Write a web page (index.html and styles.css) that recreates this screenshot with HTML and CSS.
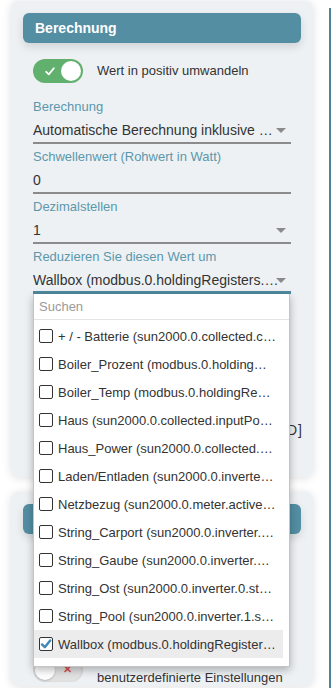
FILE: index.html
```html
<!DOCTYPE html>
<html>

<head>
    <meta name="viewport" content="width=device-width, initial-scale=1.0" />
    <link rel="stylesheet" href="styles.css">
</head>

<body>
    <div class="page">
        <div class="column">

            <!-- Berechnung -->
            <section class="card first-card">
                <div class="card-head">Berechnung</div>
                <div class="card-body">
                    <div class="switch-row">
                        <span class="switch on">
                            <svg class="switch-check" width="10" height="9" viewBox="0 0 10 9">
                                <path d="M1.2 4.8 L3.8 7.4 L8.8 1.2" fill="none" stroke="#fff" stroke-width="1.8" stroke-linecap="round" stroke-linejoin="round" />
                            </svg>
                            <span class="knob"></span>
                        </span>
                        <span class="switch-text">Wert in positiv umwandeln</span>
                    </div>

                    <div class="field">
                        <div class="field-label">Berechnung</div>
                        <div class="field-value select">Automatische Berechnung inklusive Eigenverbrauch</div>
                    </div>

                    <div class="field">
                        <div class="field-label">Schwellenwert (Rohwert in Watt)</div>
                        <div class="field-value">0</div>
                    </div>

                    <div class="field">
                        <div class="field-label">Dezimalstellen</div>
                        <div class="field-value select">1</div>
                    </div>

                    <div class="field focused">
                        <div class="field-label">Reduzieren Sie diesen Wert um</div>
                        <div class="field-value select">Wallbox (modbus.0.holdingRegisters.40001_Power)</div>

                        <!-- open menu -->
                        <div class="menu">
                            <div class="menu-search">Suchen</div>
                            <div class="menu-list">
                                <div class="menu-item"><span class="box"></span><span class="item-text">+ / - Batterie (sun2000.0.collected.chargeDischargePower)</span></div>
                                <div class="menu-item"><span class="box"></span><span class="item-text">Boiler_Prozent (modbus.0.holdingRegisters.40010)</span></div>
                                <div class="menu-item"><span class="box"></span><span class="item-text">Boiler_Temp (modbus.0.holdingRegisters.40012)</span></div>
                                <div class="menu-item"><span class="box"></span><span class="item-text">Haus (sun2000.0.collected.inputPower)</span></div>
                                <div class="menu-item"><span class="box"></span><span class="item-text">Haus_Power (sun2000.0.collected.houseConsumption)</span></div>
                                <div class="menu-item"><span class="box"></span><span class="item-text">Laden/Entladen (sun2000.0.inverter.0.battery)</span></div>
                                <div class="menu-item"><span class="box"></span><span class="item-text">Netzbezug (sun2000.0.meter.activePower)</span></div>
                                <div class="menu-item"><span class="box"></span><span class="item-text">String_Carport (sun2000.0.inverter.1.string.PV1)</span></div>
                                <div class="menu-item"><span class="box"></span><span class="item-text">String_Gaube (sun2000.0.inverter.0.string.PV2)</span></div>
                                <div class="menu-item"><span class="box"></span><span class="item-text">String_Ost (sun2000.0.inverter.0.string.PV1)</span></div>
                                <div class="menu-item"><span class="box"></span><span class="item-text">String_Pool (sun2000.0.inverter.1.string.PV2)</span></div>
                                <div class="menu-item selected">
                                    <span class="box checked">
                                        <svg width="12" height="12" viewBox="0 0 12 12">
                                            <path d="M2 6.4 L4.8 9.2 L10.2 2.4" fill="none" stroke="#3d88b8" stroke-width="2.4" stroke-linecap="round" stroke-linejoin="round" />
                                        </svg>
                                    </span>
                                    <span class="item-text">Wallbox (modbus.0.holdingRegisters.40001_Power)</span>
                                </div>
                            </div>
                        </div>
                    </div>

                    <!-- rest of the card lies behind the menu -->
                    <div class="note">[ID]</div>
                </div>
            </section>

            <!-- second card, mostly covered -->
            <section class="card">
                <div class="card-head"></div>
                <div class="card-body">
                    <div class="switch-row bottom-row">
                        <span class="switch off">
                            <span class="knob"></span>
                            <span class="cross">&#x2715;</span>
                        </span>
                        <span class="switch-text">Wert für<br>benutzerdefinierte Einstellungen</span>
                    </div>
                </div>
            </section>
        </div>
        <div class="edge"></div>
    </div>
</body>

</html>
```

FILE: styles.css
```css
html,
body {
    margin: 0;
    padding: 0;
    background: #fff;
    font-family: "Liberation Sans", Arial, sans-serif;
    color: #333;
    overflow: hidden;
}

.page {
    display: flex;
    height: 688px;
}

.column {
    width: 302px;
    margin-left: 11px;
    padding-top: 1px;
    display: flex;
    flex-direction: column;
    gap: 15px;
}

.edge {
    width: 2px;
    margin-left: 16px;
    margin-top: 8px;
    background: #4d8597;
}

.card {
    background: #edf1f4;
    border-radius: 8px;
    padding: 12px 12px 0 12px;
    box-shadow: 0 1px 10px rgba(0, 0, 0, 0.13);
}

.first-card {
    padding-bottom: 39px;
}

.card-head {
    height: 30px;
    line-height: 30px;
    padding-left: 12px;
    background: #538ea3;
    border-radius: 6px;
    color: #fff;
    font-weight: bold;
    font-size: 14px;
    box-shadow: 0 4px 8px rgba(0, 0, 0, 0.12);
}

.card-body {
    padding: 0 10px;
}

/* switches */
.switch-row {
    display: flex;
    align-items: center;
    gap: 14px;
    margin: 16px 0 11px;
    font-size: 13px;
}

.switch {
    position: relative;
    flex: none;
    width: 50px;
    height: 24px;
    border-radius: 12px;
    background: #e2e2e2;
    box-shadow: inset 0 1px 3px rgba(0, 0, 0, 0.15);
}

.switch .knob {
    position: absolute;
    top: 2px;
    left: 2px;
    width: 20px;
    height: 20px;
    border-radius: 50%;
    background: #fff;
    box-shadow: 0 1px 2px rgba(0, 0, 0, 0.2);
}

.switch.on {
    background: #62b06d;
    box-shadow: none;
}

.switch.on .knob {
    left: 28px;
    box-shadow: none;
}

.switch-check {
    position: absolute;
    left: 12px;
    top: 8px;
}

.switch .cross {
    position: absolute;
    left: 30px;
    top: 5px;
    font-size: 11px;
    line-height: 12px;
    color: #d9534f;
    font-weight: bold;
}

.switch-text {
    line-height: 16px;
    white-space: nowrap;
}

.bottom-row {
    margin: 120px 0 0;
}

/* fields */
.field {
    position: relative;
    padding-top: 5px;
}

.field-label {
    font-size: 13px;
    line-height: 16px;
    color: #5b98ac;
}

.field-value {
    position: relative;
    font-size: 14px;
    line-height: 20px;
    padding: 5px 12px 2px 0;
    border-bottom: 2px solid #8b8b8b;
    white-space: nowrap;
    overflow: hidden;
    text-overflow: ellipsis;
}

.select::after {
    content: "";
    position: absolute;
    right: 5px;
    top: 13px;
    border-left: 5px solid transparent;
    border-right: 5px solid transparent;
    border-top: 5px solid #8a8a8a;
}

.focused .field-value {
    border-bottom: 3px solid #4f8a9e;
    padding-bottom: 1px;
}

.note {
    margin: 128px -12px 0 0;
    text-align: right;
    font-size: 14px;
    line-height: 16px;
    letter-spacing: 1px;
}

/* dropdown menu */
.menu {
    position: absolute;
    z-index: 5;
    top: 100%;
    left: 0;
    width: 257px;
    box-sizing: border-box;
    background: #fff;
    border: 1px solid #c4c4c4;
    border-top: none;
    box-shadow: 0 3px 8px rgba(0, 0, 0, 0.28);
    padding-bottom: 8px;
}

.menu-search {
    height: 25px;
    line-height: 25px;
    padding-left: 5px;
    font-size: 13px;
    color: #9a9a9a;
    border-bottom: 1px solid #e4e4e4;
}

.menu-list {
    padding-top: 2px;
    width: 249px;
}

.menu-item {
    display: flex;
    align-items: center;
    gap: 5px;
    height: 28px;
    padding: 0 7px 0 5px;
    font-size: 13px;
}

.menu-item.selected {
    background: #ececec;
}

.box {
    flex: none;
    width: 12px;
    height: 12px;
    border: 1px solid #333;
    border-radius: 2px;
    background: #fff;
}

.box svg {
    display: block;
}

.item-text {
    white-space: nowrap;
    overflow: hidden;
    text-overflow: ellipsis;
}
```
